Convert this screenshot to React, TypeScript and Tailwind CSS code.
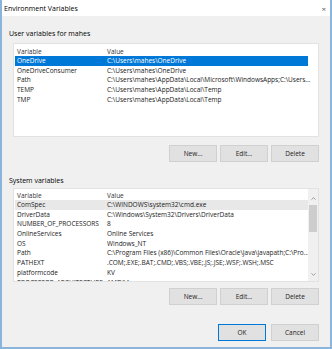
import { ChevronUp, ChevronDown } from "lucide-react";

const userVars = [
  ["OneDrive", "C:\\Users\\mahes\\OneDrive"],
  ["OneDriveConsumer", "C:\\Users\\mahes\\OneDrive"],
  ["Path", "C:\\Users\\mahes\\AppData\\Local\\Microsoft\\WindowsApps;C:\\Users..."],
  ["TEMP", "C:\\Users\\mahes\\AppData\\Local\\Temp"],
  ["TMP", "C:\\Users\\mahes\\AppData\\Local\\Temp"],
];

const sysVars = [
  ["ComSpec", "C:\\WINDOWS\\system32\\cmd.exe"],
  ["DriverData", "C:\\Windows\\System32\\Drivers\\DriverData"],
  ["NUMBER_OF_PROCESSORS", "8"],
  ["OnlineServices", "Online Services"],
  ["OS", "Windows_NT"],
  ["Path", "C:\\Program Files (x86)\\Common Files\\Oracle\\Java\\javapath;C:\\Pro..."],
  ["PATHEXT", ".COM;.EXE;.BAT;.CMD;.VBS;.VBE;.JS;.JSE;.WSF;.WSH;.MSC"],
  ["platformcode", "KV"],
  ["PROCESSOR_ARCHITECTURE", "AMD64"],
];

function Btn({ label, primary }: { label: string; primary?: boolean }) {
  return (
    <div
      className={
        "flex h-[17px] w-[48px] items-center justify-center bg-[#e1e1e1] text-[6.5px] text-[#222] " +
        (primary ? "border border-[#0078d7]" : "border border-[#d0d0d0]")
      }
    >
      {label}
    </div>
  );
}

function Row({ name, value, sel }: { name: string; value: string; sel?: "blue" | "gray" }) {
  const bg = sel === "blue" ? "bg-[#0078d7] text-white" : sel === "gray" ? "bg-[#e8e8e8] text-[#1a1a1a]" : "text-[#1a1a1a]";
  return (
    <div className={"flex h-[9.7px] shrink-0 items-center whitespace-nowrap leading-[9.7px] " + bg}>
      <div className="w-[92px] shrink-0 pl-[2px]">{name}</div>
      <div>{value}</div>
    </div>
  );
}

export default function App() {
  return (
    <div
      className="flex h-[349px] w-[332px] flex-col overflow-hidden border-x-2 border-b-2 border-[#8ab4dc] bg-[#f0f0f0] text-[6.5px] leading-[9px]"
      style={{ fontFamily: '"Open Sans", "Noto Sans", sans-serif' }}
    >
      <div className="flex h-[16px] shrink-0 items-center justify-between bg-white pl-[2px] pr-[4px] text-[7px] text-black">
        <span>Environment Variables</span>
        <span className="text-[8px] text-[#555]">×</span>
      </div>

      <div className="flex flex-col pl-[7px] pr-[11px]">
        <div className="mt-[13px] h-[9px] text-[7px] text-black">User variables for mahes</div>
        <div className="ml-[4px] mt-[5px] flex h-[94px] flex-col border border-[#e2e2e2] bg-white pl-[1px] pr-[10px] pt-[3px]">
          <div className="flex h-[9px] shrink-0 items-center text-[#333]">
            <div className="w-[92px] pl-[2px]">Variable</div>
            <div>Value</div>
          </div>
          {userVars.map(([n, v], i) => (
            <Row key={n + i} name={n} value={v} sel={i === 0 ? "blue" : undefined} />
          ))}
        </div>
        <div className="mt-[8px] flex justify-end gap-[3px]">
          <Btn label="New..." />
          <Btn label="Edit..." />
          <Btn label="Delete" />
        </div>

        <div className="mt-[14px] h-[9px] text-[7px] text-black">System variables</div>
        <div className="ml-[4px] mt-[3px] flex h-[94px] border border-[#e2e2e2] bg-white">
          <div className="flex flex-1 flex-col overflow-hidden pl-[1px] pt-[2px]">
            <div className="flex h-[9px] shrink-0 items-center text-[#333]">
              <div className="w-[92px] pl-[2px]">Variable</div>
              <div>Value</div>
            </div>
            {sysVars.map(([n, v], i) => (
              <Row key={n + i} name={n} value={v} sel={i === 0 ? "gray" : undefined} />
            ))}
          </div>
          <div className="flex w-[10px] shrink-0 flex-col items-center bg-[#f0f0f0]">
            <ChevronUp size={7} strokeWidth={2} className="mt-[6px] text-[#606060]" />
            <div className="mt-[3px] h-[27px] w-[8px] bg-[#cdcdcd]" />
            <div className="flex-1" />
            <ChevronDown size={7} strokeWidth={2} className="mb-[3px] text-[#606060]" />
          </div>
        </div>
        <div className="mt-[6px] flex justify-end gap-[3px]">
          <Btn label="New..." />
          <Btn label="Edit..." />
          <Btn label="Delete" />
        </div>

        <div className="mt-[19px] flex justify-end gap-[5px]">
          <Btn label="OK" primary />
          <Btn label="Cancel" />
        </div>
      </div>
    </div>
  );
}
